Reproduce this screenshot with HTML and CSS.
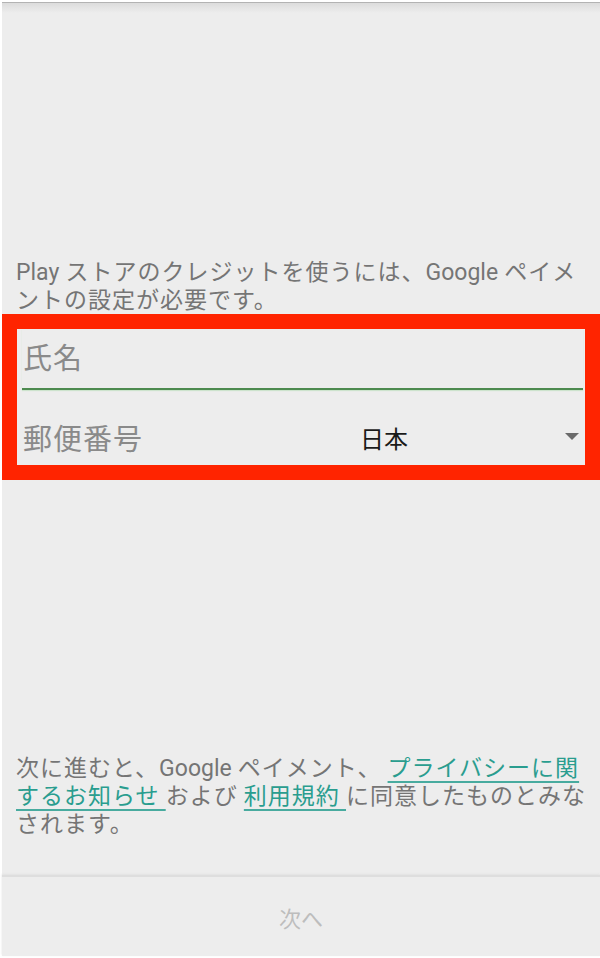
FILE: index.html
```html
<!DOCTYPE html>
<html>
<head>
    <link rel="stylesheet" href="styles.css">
</head>
<body>
    <div class="screen">
        <div class="top-shadow"></div>
        <div class="content">
            <p class="message"><span class="latin">Play</span> ストアのクレジットを使うには、<span class="latin">Google</span> ペイメントの設定が必要です。</p>
            <div class="form-box">
                <div class="field field-name">
                    <span class="placeholder">氏名</span>
                </div>
                <div class="field field-address">
                    <span class="placeholder">郵便番号</span>
                    <div class="country">
                        <span class="country-name">日本</span>
                        <span class="caret"></span>
                    </div>
                </div>
            </div>
            <p class="terms">次に進むと、<span class="latin">Google</span> ペイメント、 <a href="#">プライバシーに関するお知らせ </a>および <a href="#">利用規約 </a>に同意したものとみなされます。</p>
        </div>
        <div class="footer">
            <button class="next">次へ</button>
        </div>
    </div>
</body>
</html>
```

FILE: styles.css
```css
body {
    margin: 0;
    background-color: #ffffff;
    font-family: "Noto Sans CJK JP", "Noto Sans", sans-serif;
    overflow: hidden;
}
.screen {
    margin: 2px 0 2px 2px;
    height: 954px;
    background-color: #ededed;
    border-top: 1px solid #b3b3b3;
    display: flex;
    flex-direction: column;
    box-sizing: border-box;
}
.top-shadow {
    height: 10px;
    background: linear-gradient(#dcdcdc, #ededed);
}
.content {
    flex: 1;
    display: flex;
    flex-direction: column;
}
.latin {
    font-family: Roboto, sans-serif;
    letter-spacing: 0;
    line-height: 0;
}
.message {
    margin: 243px 0 0 0;
    padding: 0 14px;
    font-size: 23px;
    letter-spacing: 1px;
    line-height: 28px;
    color: #757575;
}
.form-box {
    margin-top: 2px;
    border: 15px solid #ff2400;
    height: 136px;
    padding: 0 2px 0 5px;
}
.field {
    display: flex;
    align-items: center;
    box-sizing: border-box;
}
.placeholder {
    font-size: 29px;
    letter-spacing: 1px;
    color: #8a8a8a;
    padding-left: 1px;
}
.field-name {
    height: 61px;
    padding-bottom: 5px;
    border-bottom: 2px solid #4d8a4f;
    box-shadow: 0 1px 1px #cde3cd;
}
.field-address {
    height: 75px;
    padding-top: 19px;
}
.country {
    flex: 1;
    display: flex;
    align-items: center;
    margin-left: 217px;
    padding-right: 4px;
}
.country-name {
    flex: 1;
    font-size: 24px;
    color: #1a1a1a;
}
.caret {
    width: 0;
    height: 0;
    border-left: 7px solid transparent;
    border-right: 7px solid transparent;
    border-top: 7px solid #6a6a6a;
    margin-top: -2px;
}
.terms {
    margin: auto 0 39px 0;
    padding: 0 14px;
    font-size: 23px;
    letter-spacing: 1px;
    line-height: 28px;
    color: #757575;
}
.terms a {
    color: #2a9d8f;
    text-decoration: underline;
    text-decoration-color: #48ab9f;
    text-decoration-thickness: 2px;
    text-underline-offset: 5px;
}
.footer {
    height: 79px;
    border-top: 2px solid #dedede;
    box-shadow: 0 -1px 2px #e2e2e2;
    display: flex;
    justify-content: center;
    align-items: center;
}
.next {
    border: none;
    background: transparent;
    font-family: inherit;
    font-size: 22px;
    color: #bdbdbd;
    padding: 0;
}
```
